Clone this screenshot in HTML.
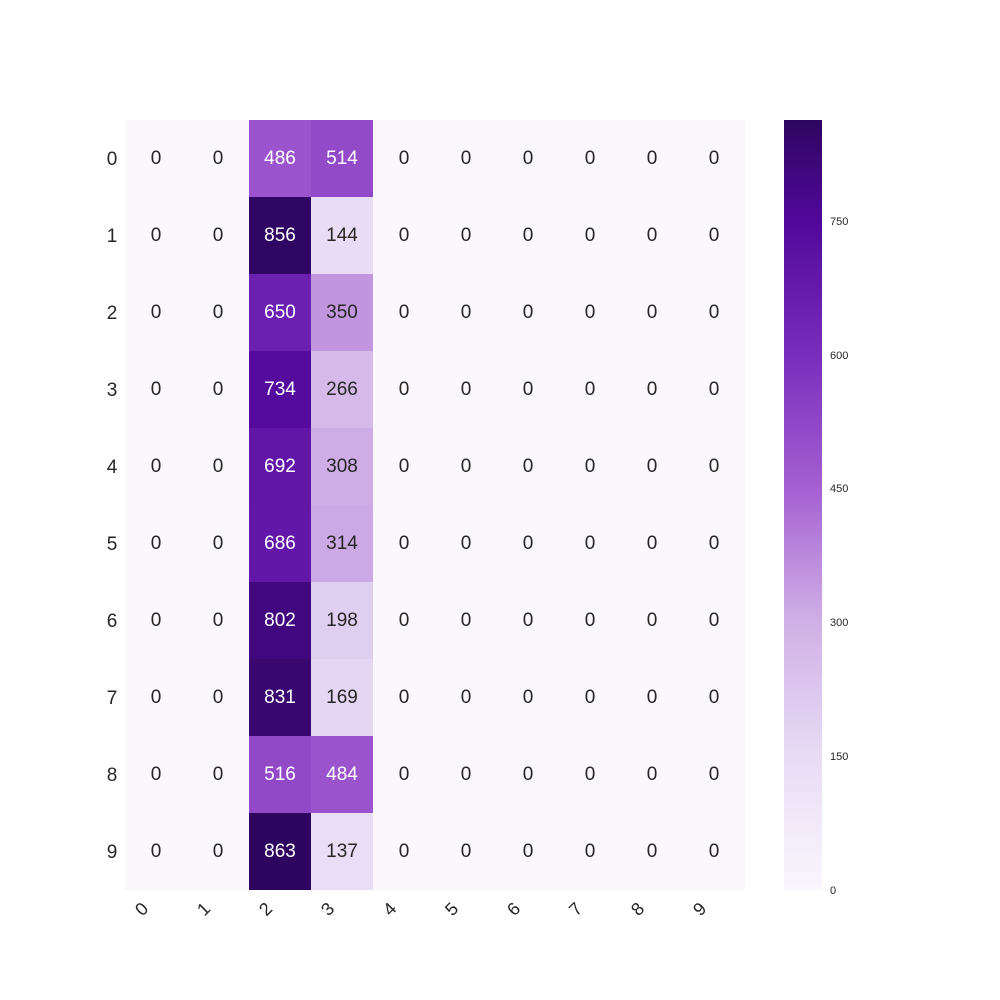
<!DOCTYPE html><html><head><style>
body{margin:0;width:1000px;height:1000px;background:#fff;font-family:"Liberation Sans",sans-serif;position:relative;overflow:hidden}
.c{position:absolute;width:62px;height:77px;display:flex;align-items:center;justify-content:center;font-size:19px;color:#262626}
.w{color:#fff}
.yl{position:absolute;left:100px;width:24px;text-align:center;font-size:19px;color:#262626}
.xl{position:absolute;top:899px;font-size:18px;color:#262626;transform:rotate(-45deg)}
.cb{position:absolute;left:784px;top:120px;width:38px;height:770px;background:linear-gradient(to top,#faf6fd 0%,#e8dcf5 17.4%,#d0b0e6 34.8%,#a560d2 52.1%,#7a2cbc 69.5%,#51089a 86.9%,#2e0660 100%)}
.tl{position:absolute;left:830px;font-size:11px;color:#262626}
</style></head><body>
<div style="position:absolute;left:125px;top:120px;width:620px;height:770px;background:#faf7fd"></div>
<div id="g"></div>
<div class="cb"></div>
<div class="tl" style="top:216px">750</div>
<div class="tl" style="top:350px">600</div>
<div class="tl" style="top:483px">450</div>
<div class="tl" style="top:617px">300</div>
<div class="tl" style="top:751px">150</div>
<div class="tl" style="top:885px">0</div>
<script>
var d=[[486,514],[856,144],[650,350],[734,266],[692,308],[686,314],[802,198],[831,169],[516,484],[863,137]];
var stops=[[0,[250,246,253]],[150,[232,220,245]],[300,[208,176,230]],[450,[165,96,210]],[600,[122,44,188]],[750,[81,8,154]],[863,[46,6,96]]];
function col(v){for(var i=1;i<stops.length;i++){if(v<=stops[i][0]){var a=stops[i-1],b=stops[i],t=(v-a[0])/(b[0]-a[0]);return 'rgb('+a[1].map(function(x,k){return Math.round(x+(b[1][k]-x)*t)}).join(',')+')';}}}
var h='';
for(var r=0;r<10;r++){h+='<div class="yl" style="top:'+(149+r*77)+'px">'+r+'</div>';
for(var c=0;c<10;c++){var v=c==2?d[r][0]:c==3?d[r][1]:0;var bg=v?col(v):'transparent';
h+='<div class="c'+(v>430?' w':'')+'" style="left:'+(125+c*62)+'px;top:'+(120+r*77)+'px;background:'+bg+'">'+v+'</div>';}}
for(var c=0;c<10;c++)h+='<div class="xl" style="left:'+(137+c*62)+'px">'+c+'</div>';
document.getElementById('g').innerHTML=h;
</script></body></html>
